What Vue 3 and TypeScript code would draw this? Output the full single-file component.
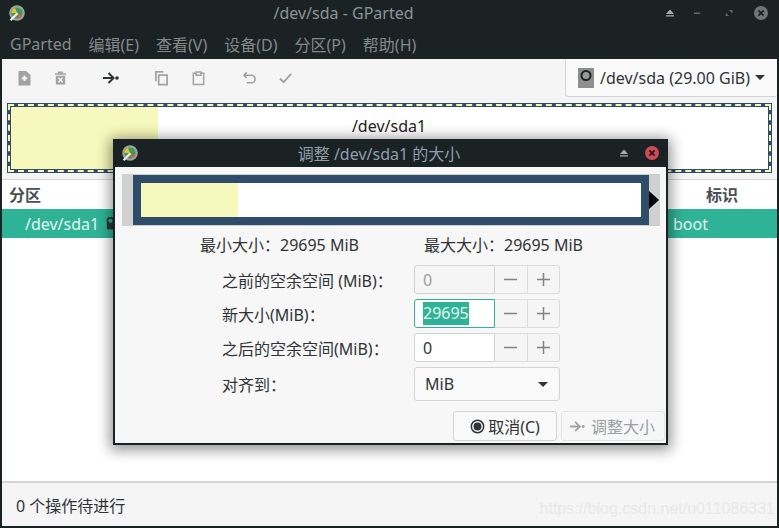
<script setup lang="ts">
const menus: string[] = ['GParted', '编辑(E)', '查看(V)', '设备(D)', '分区(P)', '帮助(H)']
interface SizeRow { label: string; value: string; state: string }
const rows: SizeRow[] = [
  { label: '之前的空余空间 (MiB)：', value: '0', state: 'off' },
  { label: '新大小(MiB)：', value: '29695', state: 'focus' },
  { label: '之后的空余空间(MiB)：', value: '0', state: 'on' },
]
</script>

<template>
  <div class="win">
    <header class="titlebar">
      <svg class="appicon" viewBox="0 0 16 16">
        <circle cx="8" cy="8" r="7.8" fill="#9aa39e" />
        <circle cx="8" cy="8" r="5.6" fill="#3f9a5a" />
        <path d="M8 8 L2.6 8 A5.6 5.6 0 0 1 6 2.8 Z" fill="#f0c020" />
        <path d="M8 8 L13 11 A6 6 0 0 1 9 13.4 Z" fill="#e2564c" />
        <path d="M0.8 14.6 L7.6 7.4 L9.2 9 L2.4 16 Z" fill="#f0f0f0" />
      </svg>
      <span class="title">/dev/sda - GParted</span>
      <div class="wm">
        <svg viewBox="0 0 12 12" class="wm-i"><path d="M6 2.5 L10 7 H2 Z M2 8.2 H10 V9.6 H2 Z" fill="#a5adb0" /></svg>
        <svg viewBox="0 0 12 12" class="wm-i w2"><path d="M3 5.5 H9 V7 H3 Z" fill="#5f6a6e" /></svg>
        <svg viewBox="0 0 12 12" class="wm-i w3"><path d="M6 3 H9.5 V6.5 Z M2.8 5.8 L6 9 H2.8 Z" fill="#5f6a6e" /></svg>
        <svg viewBox="0 0 16 16" class="wm-x"><circle cx="8" cy="8" r="7" fill="#6e777a" /><path d="M5.4 5.4 L10.6 10.6 M10.6 5.4 L5.4 10.6" stroke="#1b2224" stroke-width="1.8" /></svg>
      </div>
    </header>
    <nav class="menubar">
      <span v-for="m in menus" :key="m">{{ m }}</span>
    </nav>
    <main class="body">
      <div class="toolbar">
        <div class="tools">
          <svg class="ti" viewBox="0 0 15 16"><path d="M1.5 1 H9 L13.5 5 V15.5 H1.5 Z" fill="#a2a2a2" /><path d="M7.5 5.5 V11 M4.8 8.2 H10.2" stroke="#f5f5f5" stroke-width="2" /></svg>
          <svg class="ti t2" viewBox="0 0 16 16"><path d="M2 3 H14 V4.4 H2 Z M5.5 1 H10.5 V3 H5.5 Z M3 5.5 H13 V15 H3 Z" fill="#a2a2a2" /><path d="M5.8 7.6 L10.2 12.6 M10.2 7.6 L5.8 12.6" stroke="#f5f5f5" stroke-width="1.6" /></svg>
          <svg class="ti t3" viewBox="0 0 18 16"><path d="M1 8 H11 M6.5 3 L11.5 8 L6.5 13" fill="none" stroke="#2e3436" stroke-width="2" /><circle cx="15" cy="8" r="1.8" fill="#2e3436" /></svg>
          <svg class="ti t4" viewBox="0 0 16 16"><path d="M10 1.5 H2 V11.5 M5 5 H14 V15 H5 Z" fill="none" stroke="#a2a2a2" stroke-width="1.8" /></svg>
          <svg class="ti t5" viewBox="0 0 16 16"><path d="M5 3 H2.5 V15 H13.5 V3 H11 M5.5 1.5 H10.5 V5 H5.5 Z" fill="none" stroke="#a2a2a2" stroke-width="1.6" /></svg>
          <svg class="ti t6" viewBox="0 0 16 16"><path d="M5 2 L2 5 L5 8 M2.5 5 H10 A4 4 0 0 1 10 13 H5" fill="none" stroke="#a2a2a2" stroke-width="1.7" /></svg>
          <svg class="ti t7" viewBox="0 0 16 16"><path d="M2 8.5 L6 12.5 L14 3.5" fill="none" stroke="#a2a2a2" stroke-width="2" /></svg>
        </div>
        <div class="device">
          <svg class="disk" viewBox="0 0 16 20"><rect width="16" height="20" fill="#8e8e8e" /><circle cx="8" cy="7.5" r="4.5" fill="#9a9a9a" stroke="#1e2223" stroke-width="2" /></svg>
          <span>/dev/sda (29.00 GiB)</span>
          <i class="caret"></i>
        </div>
      </div>
      <div class="graph">
        <div class="graph-in">
          <div class="used"></div>
          <div class="free">/dev/sda1</div>
        </div>
      </div>
      <div class="list">
        <div class="heads"><span>分区</span><span>标识</span></div>
        <div class="row">
          <span class="dev">/dev/sda1</span>
          <svg class="lock" viewBox="0 0 10 14"><circle cx="5" cy="4" r="3.4" fill="none" stroke="#2e3436" stroke-width="2" /><rect x="1" y="6.5" width="8" height="7" fill="#2e3436" /></svg>
          <span class="flag">boot</span>
        </div>
      </div>
      <footer class="status">
        <span>0 个操作待进行</span>
        <span class="mark">https://blog.csdn.net/u011086331</span>
      </footer>
    </main>

    <section class="dialog">
      <header class="d-title">
        <svg class="d-icon" viewBox="0 0 16 16">
          <circle cx="8" cy="8" r="7.8" fill="#9aa39e" />
          <circle cx="8" cy="8" r="5.6" fill="#3f9a5a" />
          <path d="M8 8 L2.6 8 A5.6 5.6 0 0 1 6 2.8 Z" fill="#f0c020" />
          <path d="M8 8 L13 11 A6 6 0 0 1 9 13.4 Z" fill="#e2564c" />
          <path d="M0.8 14.6 L7.6 7.4 L9.2 9 L2.4 16 Z" fill="#f0f0f0" />
        </svg>
        <span class="d-text">调整 /dev/sda1 的大小</span>
        <svg viewBox="0 0 12 12" class="d-up"><path d="M6 2.5 L10 7 H2 Z M2 8.2 H10 V9.6 H2 Z" fill="#a5adb0" /></svg>
        <svg viewBox="0 0 16 16" class="d-x"><circle cx="8" cy="8" r="7" fill="#cf4a55" /><path d="M5.4 5.4 L10.6 10.6 M10.6 5.4 L5.4 10.6" stroke="#2a1a1c" stroke-width="1.8" /></svg>
      </header>
      <div class="d-body">
        <div class="bar">
          <div class="bar-part">
            <div class="bar-used"></div>
          </div>
          <i class="bar-arrow"></i>
        </div>
        <div class="limits">
          <span>最小大小：29695 MiB</span>
          <span>最大大小：29695 MiB</span>
        </div>
        <div class="form">
          <template v-for="r in rows" :key="r.label">
            <label class="lbl">{{ r.label }}</label>
            <div class="spin" :class="r.state">
              <div class="field"><span class="val">{{ r.value }}</span></div>
              <div class="btn">
                <svg viewBox="0 0 16 16"><path d="M1 8 H15" stroke="#7d8486" stroke-width="1.6" /></svg>
              </div>
              <div class="btn">
                <svg viewBox="0 0 16 16"><path d="M1 8 H15 M8 1 V15" stroke="#7d8486" stroke-width="1.6" /></svg>
              </div>
            </div>
          </template>
          <label class="lbl">对齐到：</label>
          <div class="combo"><span>MiB</span><i class="caret"></i></div>
        </div>
        <div class="actions">
          <button class="b cancel" type="button">
            <svg viewBox="0 0 16 16" class="b-i"><circle cx="8" cy="8" r="6.6" fill="none" stroke="#2e3436" stroke-width="1.6" /><circle cx="8" cy="8" r="4.2" fill="#2e3436" /></svg>
            取消(C)
          </button>
          <button class="b apply" type="button">
            <svg viewBox="0 0 18 16" class="b-a"><path d="M1 8 H11 M6.5 3 L11.5 8 L6.5 13" fill="none" stroke="#a2a2a2" stroke-width="2" /><circle cx="15" cy="8" r="1.5" fill="#a2a2a2" /></svg>
            调整大小
          </button>
        </div>
      </div>
    </section>
  </div>
</template>

<style scoped>
.win {
  position: relative;
  width: 779px;
  height: 528px;
  overflow: hidden;
  display: flex;
  flex-direction: column;
  background: #1b2224;
  font-family: "Noto Sans", "Noto Sans CJK SC", sans-serif;
  font-size: 16px;
  color: #2e3436;
}
.titlebar {
  position: relative;
  height: 29px;
  display: flex;
  align-items: center;
  justify-content: center;
  flex: none;
}
.appicon {
  position: absolute;
  left: 9px;
  top: 5px;
  width: 16px;
  height: 16px;
}
.title {
  color: #8b9498;
  margin-top: -3px;
  margin-right: 92px;
}
.wm {
  position: absolute;
  right: 10px;
  top: 5px;
  display: flex;
  align-items: center;
}
.wm-i { width: 12px; height: 12px; }
.w2 { margin-left: 15px; }
.w3 { margin-left: 20px; }
.wm-x { width: 16px; height: 16px; margin-left: 18px; }
.menubar {
  height: 30px;
  flex: none;
  display: flex;
  align-items: center;
  gap: 17px;
  padding-left: 10px;
  color: #84898b;
}
.body {
  flex: 1;
  margin: 0 2px 2px;
  display: flex;
  flex-direction: column;
  background: #f5f5f5;
  min-height: 0;
}
.toolbar {
  height: 44px;
  flex: none;
  display: flex;
  justify-content: space-between;
  align-items: flex-start;
}
.tools {
  display: flex;
  align-items: center;
  height: 38px;
  padding-left: 15px;
}
.ti { width: 15px; height: 16px; }
.t2 { margin-left: 21px; }
.t3 { width: 18px; margin-left: 34px; }
.t4 { margin-left: 34px; }
.t5 { margin-left: 22px; }
.t6 { margin-left: 36px; }
.t7 { margin-left: 21px; }
.device {
  width: 212px;
  height: 38px;
  box-sizing: border-box;
  background: #f9f9f9;
  border: 1px solid #d3d3d3;
  border-top: 0;
  border-right: 0;
  border-radius: 0 0 3px 3px;
  display: flex;
  align-items: center;
  padding-left: 12px;
}
.disk { width: 16px; height: 20px; margin-right: 6px; }
.caret {
  display: block;
  width: 0;
  height: 0;
  border-left: 5px solid transparent;
  border-right: 5px solid transparent;
  border-top: 5px solid #2e3436;
}
.device .caret { margin-left: 5px; }
.graph {
  height: 70px;
  flex: none;
  margin: 0 5px;
  padding: 1px;
  box-sizing: border-box;
  background: #2f4d6b;
}
.graph-in {
  height: 100%;
  box-sizing: border-box;
  border: 2px dashed #f7f7b8;
  display: flex;
  padding: 1px;
  background: #2f4d6b;
}
.used { width: 147px; background: #f7f8bb; }
.free {
  flex: 1;
  background: #fff;
  text-align: center;
  padding-top: 8px;
  padding-right: 148px;
  color: #1f2324;
}
.list {
  flex: 1;
  margin-top: 6px;
  background: #fff;
  border-top: 1px solid #d5d5d5;
  border-bottom: 2px solid #d5d5d5;
}
.heads {
  height: 29px;
  box-sizing: border-box;
  display: flex;
  justify-content: space-between;
  align-items: center;
  padding: 0 39px 2px 7px;
  font-weight: 700;
  color: #4a5052;
}
.row {
  position: relative;
  height: 29px;
  background: #2fb397;
  color: #e3f5f1;
  display: flex;
  align-items: center;
  padding-left: 23px;
}
.dev { width: 81px; }
.lock { width: 9px; height: 13px; }
.flag { position: absolute; left: 671px; }
.status {
  height: 43px;
  flex: none;
  display: flex;
  align-items: center;
  justify-content: space-between;
  padding: 0 2px 0 14px;
}
.mark {
  font-family: "Liberation Sans", sans-serif;
  font-size: 16px;
  color: #e8e8e8;
  margin-top: 8px;
}
.dialog {
  position: absolute;
  left: 113px;
  top: 139px;
  width: 555px;
  height: 306px;
  box-sizing: border-box;
  border: 2px solid #1b2224;
  border-top: 0;
  border-radius: 2px 2px 0 0;
  background: #f7f7f7;
  box-shadow: 0 2px 14px 3px rgba(0, 0, 0, 0.42);
  display: flex;
  flex-direction: column;
}
.d-title {
  height: 28px;
  flex: none;
  margin: 0 -2px;
  background: #1b2224;
  position: relative;
  display: flex;
  align-items: center;
  justify-content: center;
}
.d-icon { position: absolute; left: 9px; top: 6px; width: 16px; height: 16px; }
.d-text { color: #8e9fae; margin-right: 23px; }
.d-up { position: absolute; right: 38px; top: 8px; width: 12px; height: 12px; }
.d-x { position: absolute; right: 8px; top: 6px; width: 16px; height: 16px; }
.d-body {
  flex: 1;
  display: flex;
  flex-direction: column;
  padding: 7px 6px 0 7px;
  min-height: 0;
}
.bar {
  height: 52px;
  flex: none;
  background: #d0d0d0;
  padding: 1px 0 1px 11px;
  box-sizing: border-box;
  display: flex;
  align-items: center;
}
.bar-part {
  width: 516px;
  height: 50px;
  box-sizing: border-box;
  background: #fff;
  border: 8px solid #2f4d6b;
  flex: none;
}
.bar-used { width: 97px; height: 100%; background: #f7f8bb; }
.bar-arrow {
  display: block;
  width: 0;
  height: 0;
  border-top: 9px solid transparent;
  border-bottom: 9px solid transparent;
  border-left: 10px solid #000;
}
.limits {
  display: flex;
  padding-left: 78px;
  margin-top: 9px;
  height: 20px;
  line-height: 20px;
}
.limits span { width: 224px; white-space: nowrap; }
.form {
  display: grid;
  grid-template-columns: 192px 146px;
  grid-template-rows: 29px 29px 29px 34px;
  row-gap: 5px;
  margin-top: 10px;
  padding-left: 100px;
}
.lbl {
  display: flex;
  align-items: center;
  white-space: nowrap;
}
.spin { display: flex; height: 29px; }
.field {
  width: 81px;
  box-sizing: border-box;
  background: #fff;
  border: 1px solid #d3d3d3;
  border-radius: 3px 0 0 3px;
  display: flex;
  align-items: center;
  padding-left: 8px;
}
.off .field { background: #f5f5f5; color: #98a0a2; }
.focus .field { border-color: #2fb397; }
.focus .val { background: #2fb397; color: #e3f5f1; line-height: 23px; }
.btn {
  width: 32.5px;
  background: #f5f5f5;
  border: solid #dcdcdc;
  border-width: 1px 1px 1px 0;
  box-sizing: border-box;
  display: flex;
  align-items: center;
  justify-content: center;
}
.btn:last-child { border-radius: 0 3px 3px 0; }
.btn svg { width: 15px; height: 15px; }
.combo {
  box-sizing: border-box;
  background: #f9f9f9;
  border: 1px solid #d3d3d3;
  border-radius: 3px;
  display: flex;
  align-items: center;
  justify-content: space-between;
  padding: 0 11px 0 10px;
}
.actions {
  display: flex;
  justify-content: flex-end;
  gap: 4px;
  margin-top: 10px;
  margin-right: -5px;
}
.b {
  width: 104px;
  height: 30px;
  padding: 0;
  box-sizing: border-box;
  border-radius: 3px;
  font: inherit;
  display: flex;
  align-items: center;
  justify-content: center;
}
.cancel { background: #f9f9f9; border: 1px solid #d3d3d3; color: #2e3436; }
.apply { background: #f7f7f7; border: 1px solid #e3e3e3; color: #98a0a2; padding-right: 2px; }
.b-i { width: 15px; height: 15px; margin-right: 3px; }
.b-a { width: 17px; height: 15px; margin-right: 5px; }
</style>
